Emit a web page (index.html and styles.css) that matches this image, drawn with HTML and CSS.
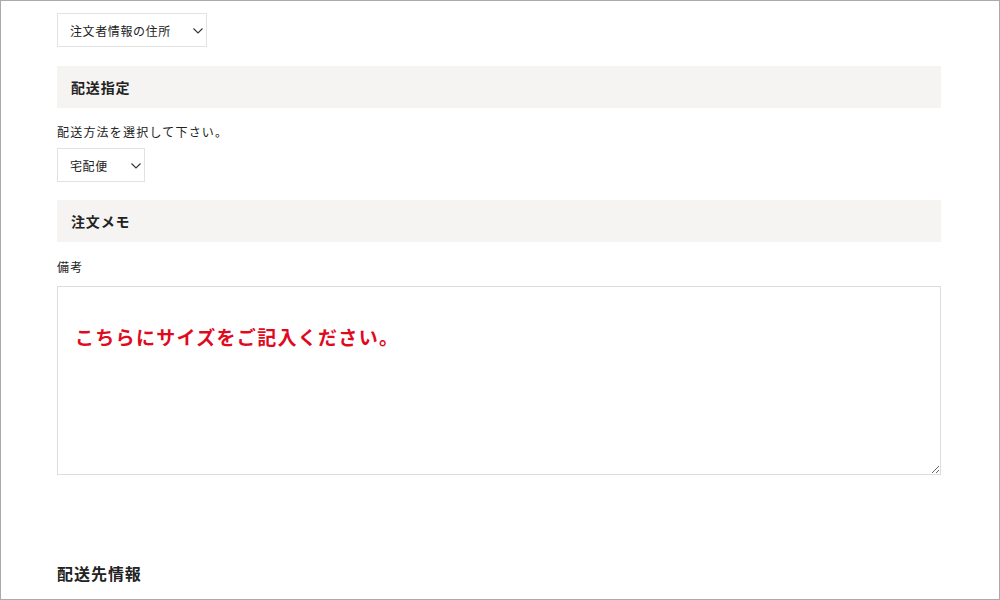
FILE: index.html
```html
<!DOCTYPE html>
<html lang="ja">

<head>
  <meta charset="UTF-8">
  <meta name="viewport" content="width=device-width, initial-scale=1.0">
  <title>ご注文手続き</title>
  <link rel="stylesheet" href="styles.css">
</head>

<body>
  <div class="frame">
    <div class="select-box address-select">
      <select>
        <option>注文者情報の住所</option>
      </select>
      <svg class="chevron" width="10" height="6" viewBox="0 0 10 6">
        <path d="M0.5 0.5 L5 5 L9.5 0.5" fill="none" stroke="#333" stroke-width="1.1" />
      </svg>
    </div>

    <h2 class="section-title">配送指定</h2>
    <p class="field-label">配送方法を選択して下さい。</p>
    <div class="select-box delivery-select">
      <select>
        <option>宅配便</option>
      </select>
      <svg class="chevron" width="10" height="6" viewBox="0 0 10 6">
        <path d="M0.5 0.5 L5 5 L9.5 0.5" fill="none" stroke="#333" stroke-width="1.1" />
      </svg>
    </div>

    <h2 class="section-title memo-title">注文メモ</h2>
    <p class="field-label memo-label">備考</p>
    <textarea class="memo">こちらにサイズをご記入ください。</textarea>

    <h3 class="sub-title">配送先情報</h3>
  </div>
</body>

</html>
```

FILE: styles.css
```css
body {
  margin: 0;
  font-family: "Noto Sans CJK JP", "Noto Sans", sans-serif;
  color: #222;
}

.frame {
  box-sizing: border-box;
  width: 1000px;
  height: 600px;
  border: 1px solid #aaa;
  padding: 12px 58px 0 56px;
  overflow: hidden;
}

.select-box {
  position: relative;
  height: 34px;
}

.address-select {
  width: 150px;
}

.delivery-select {
  width: 88px;
}

.select-box select {
  -webkit-appearance: none;
  appearance: none;
  box-sizing: border-box;
  width: 100%;
  height: 100%;
  padding: 0 0 0 12px;
  border: 1px solid #e2e2e2;
  border-radius: 0;
  background: #fff;
  font-family: inherit;
  font-size: 12px;
  letter-spacing: 0.05em;
  color: #222;
  outline: none;
}

.chevron {
  position: absolute;
  right: 4px;
  top: 15px;
  pointer-events: none;
}

.section-title {
  box-sizing: border-box;
  height: 42px;
  margin: 19px 0 0;
  padding: 0 14px;
  background: #f5f4f2;
  font-size: 14px;
  font-weight: bold;
  line-height: 42px;
  letter-spacing: 0.06em;
}

.memo-title {
  margin-top: 18px;
}

.field-label {
  margin: 15px 0 7px;
  font-size: 12px;
  line-height: 18px;
  letter-spacing: 0.1em;
}

.memo-label {
  margin: 16px 0 10px;
}

.memo {
  display: block;
  box-sizing: border-box;
  width: 100%;
  height: 189px;
  margin: 0;
  padding: 36px 17px 0;
  border: 1px solid #ddd;
  border-radius: 0;
  resize: vertical;
  font-family: inherit;
  font-size: 19px;
  font-weight: bold;
  line-height: 28px;
  letter-spacing: 1.3px;
  color: #e00a1e;
  outline: none;
}

.sub-title {
  margin: 86px 0 0;
  font-size: 16px;
  font-weight: bold;
  line-height: 24px;
  letter-spacing: 0.06em;
}
```
